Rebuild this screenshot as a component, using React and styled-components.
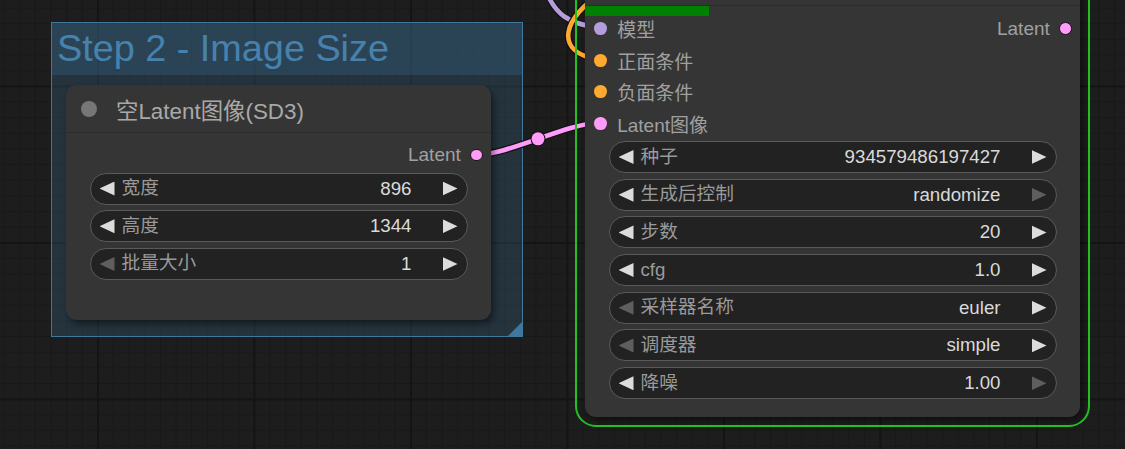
import React from 'react'
import styled, { createGlobalStyle } from 'styled-components'

const GlobalStyle = createGlobalStyle`
  html, body { margin: 0; padding: 0; background: #1d1d1d; }
  body { font-family: "Liberation Sans", "Noto Sans CJK SC", sans-serif; }
`

const SANS = `"Liberation Sans", "Noto Sans CJK SC", sans-serif`

const Canvas = styled.div`
  position: relative;
  width: 1125px;
  height: 449px;
  overflow: hidden;
  background-color: #1d1d1d;
  background-image:
    linear-gradient(#141414 2px, transparent 2px),
    linear-gradient(90deg, #141414 2px, transparent 2px),
    linear-gradient(#181818 1px, transparent 1px),
    linear-gradient(90deg, #181818 1px, transparent 1px);
  background-size: 156.5px 156.5px, 156.5px 156.5px, 15.65px 15.65px, 15.65px 15.65px;
  background-position: 0 85.5px, 97px 0, 0 7.6px, 3.6px 0;
`

/* group frame */
const Group = styled.div`
  position: absolute;
  left: 51px;
  top: 22px;
  width: 472px;
  height: 315px;
  box-sizing: border-box;
  border: 1.5px solid #3f789e;
  background: rgba(63, 120, 158, 0.25);
  display: flex;
  flex-direction: column;
  z-index: 0;
`
const GroupTitle = styled.div`
  height: 52px;
  background: rgba(63, 120, 158, 0.25);
  color: #4682ad;
  font-family: ${SANS};
  font-size: 37.8px;
  line-height: 50px;
  padding-left: 5px;
  white-space: nowrap;
`
const GroupCorner = styled.div`
  position: absolute;
  right: 0;
  bottom: 0;
  width: 14px;
  height: 14px;
  background: #3f789e;
  clip-path: polygon(100% 0, 100% 100%, 0 100%);
`

/* nodes */
const Node = styled.div`
  position: absolute;
  left: ${p => p.$x}px;
  top: ${p => p.$y}px;
  width: ${p => p.$w}px;
  height: ${p => p.$h}px;
  box-sizing: border-box;
  background: #353535;
  border-radius: 11px;
  box-shadow: 3px 4px 6px rgba(0, 0, 0, 0.45);
  display: flex;
  flex-direction: column;
  font-family: ${SANS};
  z-index: 2;
  outline: ${p => (p.$running ? '2px solid #1fc21f' : 'none')};
  outline-offset: 8px;
`
const TitleBar = styled.div`
  height: 48px;
  flex: none;
  box-sizing: border-box;
  border-bottom: 1px solid #2c2c2c;
  display: flex;
  align-items: center;
  padding-left: 15px;
  gap: 19px;
  color: #a9a9a9;
  font-size: 22.4px;
  white-space: nowrap;
`
const TitleDot = styled.span`
  width: 16px;
  height: 16px;
  border-radius: 50%;
  background: #777;
`
const Progress = styled.div`
  position: absolute;
  left: 0;
  top: 48px;
  width: ${p => p.$w}px;
  height: 10px;
  background: #008000;
`
const Body = styled.div`
  flex: 1;
  display: flex;
  flex-direction: column;
  padding: ${p => p.$top}px 23.5px 0 23.5px;
`
const SlotRow = styled.div`
  height: ${p => p.$h}px;
  margin: 0 -23.5px;
  padding: 0 8.4px 0 9px;
  display: flex;
  align-items: center;
  justify-content: space-between;
  font-size: 19px;
  color: #a0a0a0;
`
const Slot = styled.div`
  display: flex;
  align-items: center;
  gap: ${p => (p.$out ? 9 : 10.4)}px;
  flex-direction: ${p => (p.$out ? 'row-reverse' : 'row')};
  margin-left: ${p => (p.$out ? 'auto' : 0)};
`
const SlotDot = styled.span`
  width: 12.8px;
  height: 12.8px;
  border-radius: 50%;
  box-sizing: border-box;
  background: ${p => p.$c};
  border: ${p => (p.$ring ? '1.6px solid #151515' : 'none')};
  flex: none;
`
const Widgets = styled.div`
  display: flex;
  flex-direction: column;
  gap: 5.7px;
  margin-top: ${p => p.$top}px;
`
const Widget = styled.div`
  height: 32px;
  box-sizing: border-box;
  border: 1.2px solid #5a5a5a;
  border-radius: 16px;
  background: #222;
  display: flex;
  align-items: center;
  padding: 0 9px;
  font-size: 18.7px;
  line-height: 20px;
`
const Arrow = styled.span`
  width: 15px;
  height: 14px;
  flex: none;
  background: ${p => (p.$off ? '#5e5e5e' : '#dcdcdc')};
  clip-path: ${p => (p.$dir === 'l' ? 'polygon(0 50%, 100% 0, 100% 100%)' : 'polygon(0 0, 100% 50%, 0 100%)')};
`
const Label = styled.span`
  flex: 1;
  margin-left: 7px;
  padding-bottom: 1px;
  color: #9a9a9a;
  white-space: nowrap;
`
const Value = styled.span`
  margin-right: 31px;
  color: #dadada;
  white-space: nowrap;
`

const Wires = styled.svg`
  position: absolute;
  left: 0;
  top: 0;
  z-index: 1;
  overflow: visible;
`

const C = { model: '#b39ddb', cond: '#ffa931', latent: '#ff9cf9' }

const Field = ({ label, value, offL, offR }) => (
  <Widget>
    <Arrow $dir="l" $off={offL} />
    <Label>{label}</Label>
    <Value>{value}</Value>
    <Arrow $dir="r" $off={offR} />
  </Widget>
)

const samplerFields = [
  { label: '种子', value: '934579486197427' },
  { label: '生成后控制', value: 'randomize', offR: true },
  { label: '步数', value: '20' },
  { label: 'cfg', value: '1.0' },
  { label: '采样器名称', value: 'euler', offL: true },
  { label: '调度器', value: 'simple', offL: true },
  { label: '降噪', value: '1.00', offR: true },
]

const inputs = [
  { name: '模型', c: C.model },
  { name: '正面条件', c: C.cond },
  { name: '负面条件', c: C.cond },
  { name: 'Latent图像', c: C.latent },
]

const Wire = ({ d, c }) => (
  <g fill="none" strokeLinecap="round">
    <path d={d} stroke="#111" strokeWidth="7" />
    <path d={d} stroke={c} strokeWidth="4.6" />
  </g>
)

export default function App() {
  return (
    <Canvas>
      <GlobalStyle />
      <Group>
        <GroupTitle>Step 2 - Image Size</GroupTitle>
        <GroupCorner />
      </Group>

      <Wires width="1125" height="449">
        <Wire c={C.model} d="M 548 -4 C 556 12, 566 24, 600 28" />
        <Wire c={C.cond} d="M 600 -6 C 566 16, 550 52, 600 60" />
        <Wire c={C.latent} d="M 476 155 C 508 155, 568 122.7, 600 122.7" />
        <circle cx="538" cy="138.8" r="7.5" fill="#111" />
        <circle cx="538" cy="138.8" r="6.5" fill={C.latent} />
      </Wires>

      <Node $x={66} $y={85} $w={425} $h={235}>
        <TitleBar>
          <TitleDot />
          空Latent图像(SD3)
        </TitleBar>
        <Body $top={6}>
          <SlotRow $h={32}>
            <Slot $out>
              <SlotDot $c={C.latent} $ring />
              Latent
            </Slot>
          </SlotRow>
          <Widgets $top={1.5}>
            <Field label="宽度" value="896" />
            <Field label="高度" value="1344" />
            <Field label="批量大小" value="1" offL />
          </Widgets>
        </Body>
      </Node>

      <Node $x={585} $y={-42} $w={495} $h={459} $running>
        <TitleBar>
          <TitleDot />
        </TitleBar>
        <Progress $w={124} />
        <Body $top={7}>
          {inputs.map((s, i) => (
            <SlotRow key={s.name} $h={31.5}>
              <Slot>
                <SlotDot $c={s.c} />
                {s.name}
              </Slot>
              {i === 0 && (
                <Slot $out>
                  <SlotDot $c={C.latent} $ring />
                  Latent
                </Slot>
              )}
            </SlotRow>
          ))}
          <Widgets $top={2}>
            {samplerFields.map(f => (
              <Field key={f.label} {...f} />
            ))}
          </Widgets>
        </Body>
      </Node>
    </Canvas>
  )
}
